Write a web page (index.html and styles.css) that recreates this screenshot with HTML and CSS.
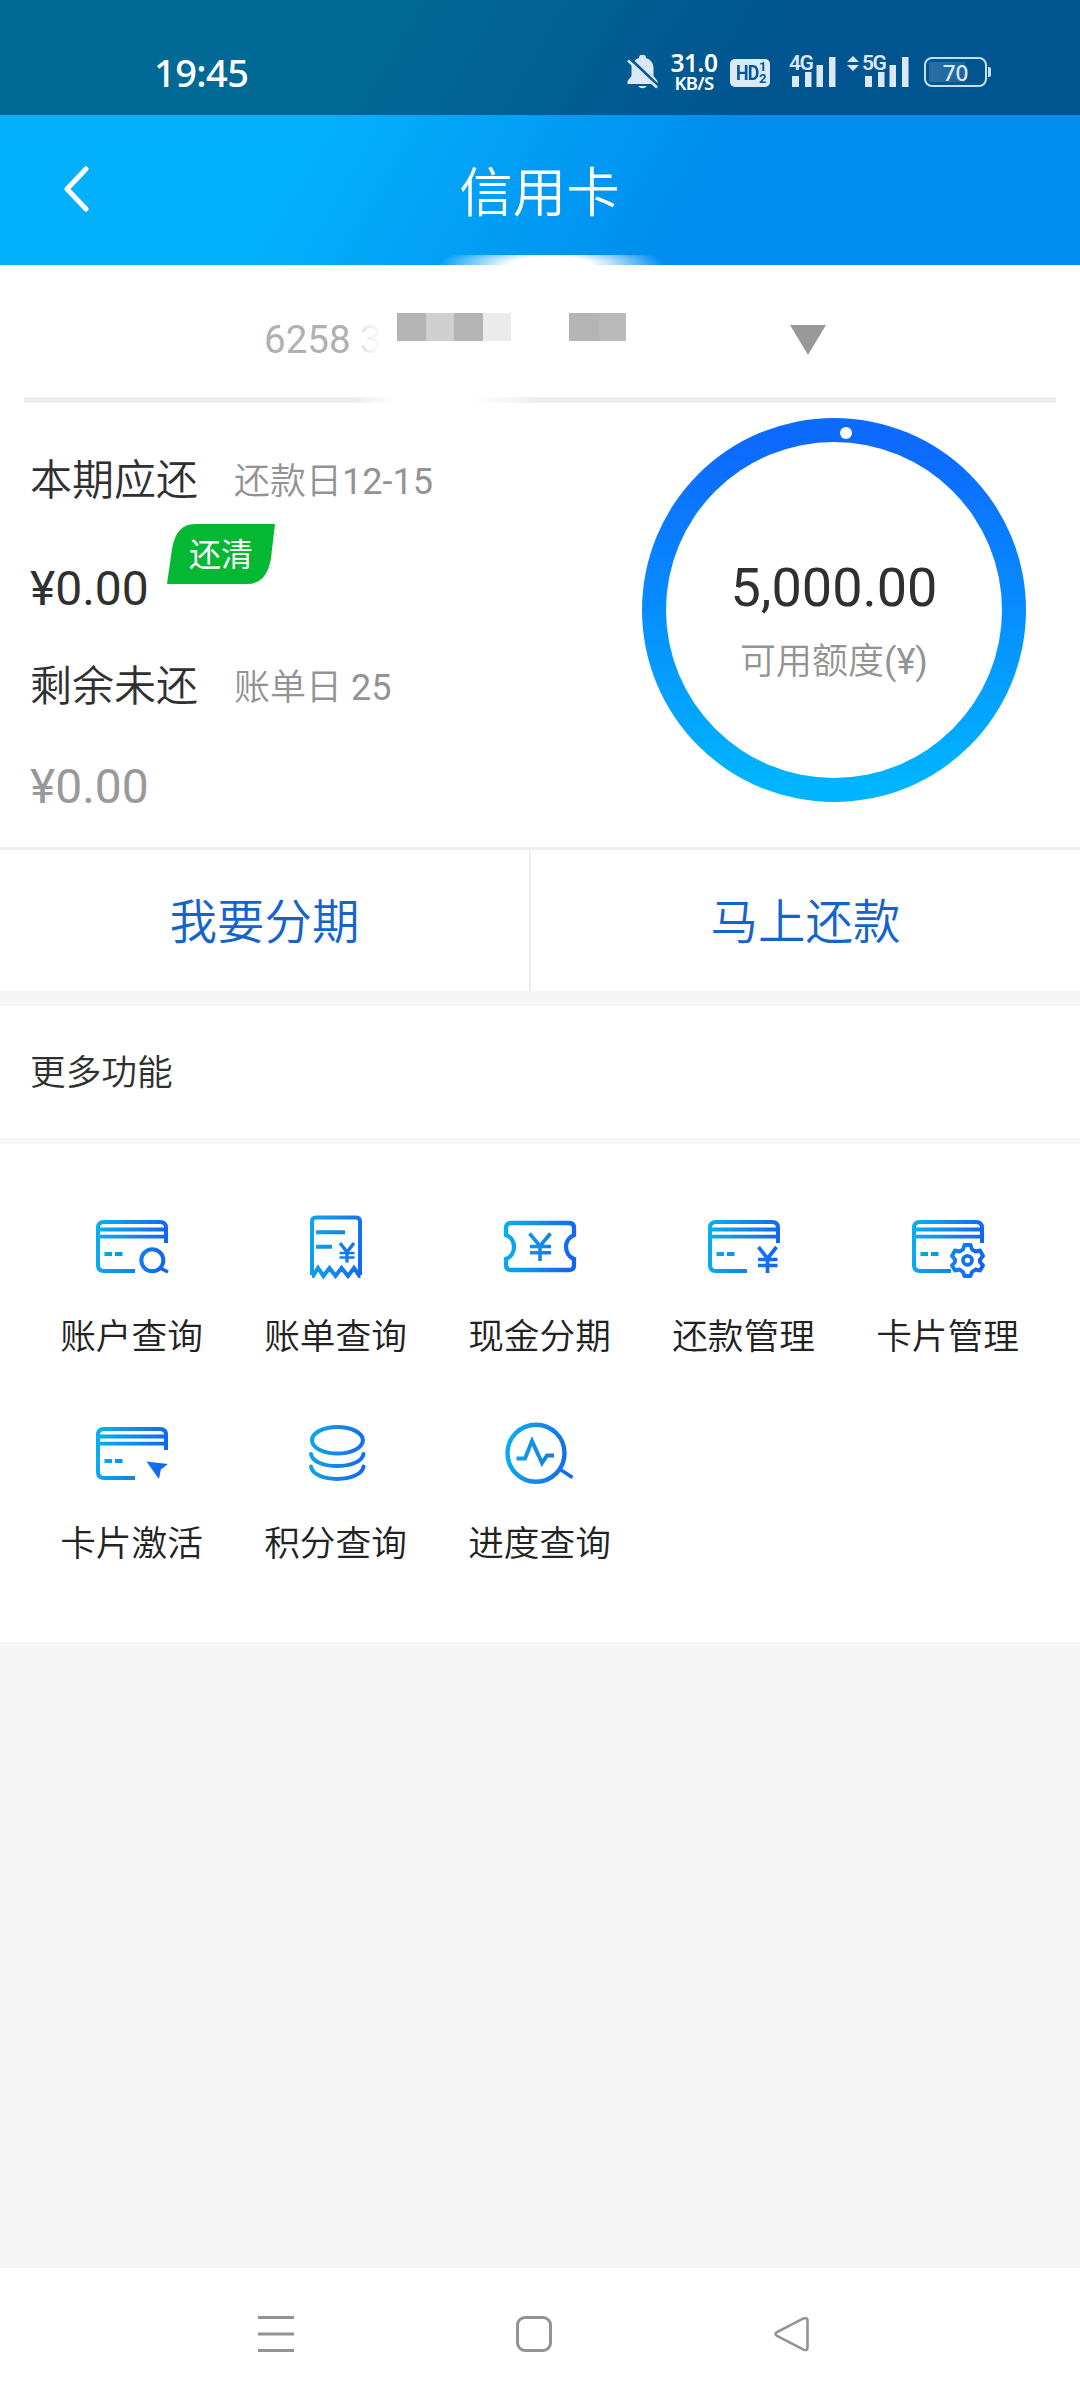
FILE: index.html
```html
<!DOCTYPE html>
<html lang="zh-CN">
<head>
<meta charset="utf-8">
<title>信用卡</title>
<link rel="stylesheet" href="styles.css">
</head>
<body>
<svg class="defs" width="0" height="0" aria-hidden="true">
  <defs>
    <linearGradient id="blue" gradientUnits="userSpaceOnUse" x1="0" y1="30" x2="72" y2="42">
      <stop offset="0" stop-color="#06b0ee"/><stop offset=".5" stop-color="#1489e6"/><stop offset="1" stop-color="#1262f2"/>
    </linearGradient>
    <g id="card">
      <path d="M70 32V17q0-6-6-6H8q-6 0-6 6v37q0 6 6 6h31"/>
      <path d="M3 18.500h66M3 25.700h66" stroke-width="3.800"/>
      <path d="M8.500 43H16M19 43h7.500"/>
    </g>
  </defs>
</svg>
<header class="top">
  <div class="status">
    <span class="time">19:45</span>
    <div class="indicators">
      <svg class="bell" width="31" height="34" viewBox="0 0 31 34">
        <path d="M12 3a3.500 3.500 0 0 1 7 0c5 1.500 7.500 5.500 7.500 10v8l4 5v3H.500v-3l4-5v-8C4.500 8.500 7 4.500 12 3zM11.500 31h8c-1 3-7 3-8 0z" fill="#dbe8f8"/>
        <path d="M3 3.500l29 28" stroke="#015897" stroke-width="3"/>
        <path d="M1 5.500l29 27" stroke="#dbe8f8" stroke-width="2.600"/>
      </svg>
      <div class="speed"><span class="rate">31.0</span><span class="unit">KB/S</span></div>
      <div class="hd"><b>HD</b><span class="sims"><i>1</i><i>2</i></span></div>
      <div class="signal sim1"><span class="net">4G</span>
        <svg width="44" height="31" viewBox="0 0 44 31"><path d="M0 20h7v11H0zM13 16h6.500v15H13zM24.500 9h6.500v22h-6.500zM37 1h6.500v30H37z" fill="#dbe8f8"/></svg>
      </div>
      <div class="signal sim2">
        <svg class="updown" width="12" height="16" viewBox="0 0 12 16"><path d="M0 6l6-6 6 6zM0 9h12l-6 6z" fill="#dbe8f8"/></svg>
        <span class="net">5G</span>
        <svg width="44" height="31" viewBox="0 0 44 31"><path d="M0 20h7v11H0zM13 16h6.500v15H13zM24.500 9h6.500v22h-6.500zM37 1h6.500v30H37z" fill="#dbe8f8"/></svg>
      </div>
      <div class="battery"><span>70</span></div>
    </div>
  </div>
  <nav class="titlebar">
    <svg class="back" width="28" height="46" viewBox="0 0 28 46"><path d="M24 3L5 23l19 20" fill="none" stroke="#fff" stroke-width="5" stroke-linecap="round" stroke-linejoin="round"/></svg>
    <h1>信用卡</h1>
    <span class="glow"></span>
  </nav>
</header>

<main>
  <section class="picker">
    <span class="number">6258 <em>3</em></span>
    <span class="mask m1"></span>
    <span class="mask m2"></span>
    <span class="arrow"></span>
  </section>

  <section class="summary">
    <div class="bills">
      <p class="bill"><strong>本期应还</strong><span>还款日<i>12-15</i></span></p>
      <p class="amount due">¥0.00
        <span class="badge"><svg width="108" height="60" viewBox="0 0 108 60"><path d="M0 60L5 25Q9 0 28 0H108L104 34Q100 60 80 60Z" fill="#04b834"/></svg><span>还清</span></span>
      </p>
      <p class="bill"><strong>剩余未还</strong><span>账单日<i> 25</i></span></p>
      <p class="amount rest">¥0.00</p>
    </div>
    <div class="ring">
      <div class="inner"><b>5,000.00</b><span>可用额度<i>(¥)</i></span></div>
      <i class="dot"></i>
    </div>
  </section>

  <section class="actions"><a>我要分期</a><a>马上还款</a></section>
  <h2 class="more">更多功能</h2>

  <section class="grid">
    <div class="item">
      <svg class="icon" viewBox="0 0 72 72"><use href="#card"/><circle cx="56.300" cy="49.300" r="11"/><path d="M64 57l8 4" stroke-width="3.400"/></svg>
      <span>账户查询</span></div>
    <div class="item">
      <svg class="icon" viewBox="0 0 72 72"><path d="M12 64V10.500q0-4 4-4h40q4 0 4 4V64"/><path d="M12 65h1l5-8 5.500 8 6-8 6 8 6-8 6.500 8 6-8 5.500 8h1"/><path d="M16 21.200h29M16 35.700h16"/><path d="M39.500 42h15M39.500 46.500h15" stroke-width="2.600"/><path d="M40 32l7 9 7-9M47 41v10.500" stroke-width="3.400"/></svg>
      <span>账单查询</span></div>
    <div class="item">
      <svg class="icon" viewBox="0 0 72 72"><path d="M2 17q0-5 5-5H65q5 0 5 5v7a13 13 0 0 0 0 24v6q0 5-5 5H7q-5 0-5-5v-6a13 13 0 0 0 0-24z" stroke-width="4.300"/><path d="M25.500 22.500L36 35l10.500-12.500M36 35v15M26 35.500h21M26 41.800h21" stroke-width="3.600"/></svg>
      <span>现金分期</span></div>
    <div class="item">
      <svg class="icon" viewBox="0 0 72 72"><use href="#card"/><path d="M50.500 36l9 11.500 9-11.500M59.500 47v15M50 48.500h19.500M50 54.500h19.500" stroke-width="3.700"/></svg>
      <span>还款管理</span></div>
    <div class="item">
      <svg class="icon" viewBox="0 0 72 72"><use href="#card"/><path d="M52.500 34h6l1.500 4.500 3.500 2 4.500-1 3 5.500-3 3.500v2.500l3 3.500-3 5-4.500-1-3.500 2.500-1.500 4h-6l-1.500-4-3.500-2.500-4.500 1-3-5 3-3.500v-2.500l-3-3.500 3-5.500 4.500 1 3.500-2z" stroke-width="3.900" stroke-linejoin="round"/><circle cx="55.500" cy="49.300" r="4.500" stroke-width="3.700"/></svg>
      <span>卡片管理</span></div>
    <div class="item">
      <svg class="icon" viewBox="0 0 72 72"><use href="#card"/><path d="M50.400 43.500l21.500 2.500-7 5.500-2 9.500z" fill="url(#blue)" stroke="none"/></svg>
      <span>卡片激活</span></div>
    <div class="item">
      <svg class="icon" viewBox="0 0 72 72"><g stroke-linecap="round"><ellipse cx="37.400" cy="22.300" rx="25.500" ry="13.300"/><path d="M11 36c2 16 50 16 52.500 0M11 48.500c2 16.500 50 16.500 52.500 0"/></g></svg>
      <span>积分查询</span></div>
    <div class="item">
      <svg class="icon" viewBox="0 0 72 72"><circle cx="32" cy="35.200" r="28.500" stroke-width="4.400"/><path d="M12.500 40.500H21l7-17.500 10 22 5-7.500h7"/><path d="M55.500 51l13 8.500" stroke-width="3.600"/></svg>
      <span>进度查询</span></div>
  </section>
</main>

<footer class="navbar">
  <svg width="36" height="36" viewBox="0 0 36 36"><path d="M0 1.500h36M0 18h36M0 34.500h36"/></svg>
  <svg width="36" height="36" viewBox="0 0 36 36"><rect x="1.500" y="1.500" width="33" height="33" rx="7.500"/></svg>
  <svg width="36" height="36" viewBox="0 0 36 36"><path d="M29.500 2.400L3 16q-3 2 0 4l26.500 13.600q4 1.500 4-2v-27q0-3.500-4-2.200z" stroke-width="2.600"/></svg>
</footer>
</body>
</html>
```
FILE: styles.css
```css
* { box-sizing: border-box; margin: 0; padding: 0; }
body {
  width: 1080px; height: 2400px; display: flex; flex-direction: column;
  background: #f5f5f5; color: #303030;
  font-family: Roboto, "Noto Sans CJK SC", sans-serif;
}
.defs { position: absolute; }
i, em { font-style: normal; }

.top { height: 265px; background: linear-gradient(120deg, #03b0fb 33%, #008def 66%); }
.status { height: 115px; background: rgba(0, 0, 0, .4); display: flex; justify-content: space-between; padding: 0 93px 0 154px; }
.time { font: 500 38px/60px "Noto Sans", sans-serif; color: #fff; padding-top: 42px; letter-spacing: -.6px; }
.indicators { display: flex; align-items: flex-start; padding-top: 55px; color: #dbe8f8; }
.speed { width: 50px; margin: -4px 0 0 11px; display: flex; flex-direction: column; align-items: center; color: #fff; font-family: "Noto Sans", sans-serif; font-weight: 600; }
.rate { font-size: 24.500px; line-height: 23px; letter-spacing: -.5px; }
.unit { font-size: 18.500px; line-height: 18px; letter-spacing: -.7px; }
.hd { width: 40px; height: 28px; margin: 4px 0 0 11px; border-radius: 5px; background: #dbe8f8; color: #015897; display: flex; justify-content: center; gap: 1px; }
.hd b { font-size: 21px; line-height: 29px; letter-spacing: -1px; transform: scaleX(.85); }
.hd .sims { display: flex; flex-direction: column; font: 700 13px/12px Roboto, sans-serif; padding-top: 2px; margin-left: -2px; }
.signal { display: flex; align-items: flex-start; height: 33px; }
.signal .net { width: 23px; margin-right: -20px; font: 600 21px/16px Roboto, sans-serif; letter-spacing: -1.5px; }
.signal > svg:last-child { margin-top: 1px; }
.sim1 { margin-left: 19px; }
.sim2 { margin-left: 11px; }
.updown { margin: 1px 3px 0 0; }
.battery { position: relative; width: 63px; height: 30px; margin: 2px 0 0 15px; border: 2px solid #c6dcef; border-radius: 8px; text-align: center; background: linear-gradient(90deg, #2a6fa7, #1c659f) 3px 3px / 36px 20px no-repeat; }
.battery span { font: 500 22.500px/27px "Noto Sans", sans-serif; }
.battery::after { content: ""; position: absolute; right: -6px; top: 8px; width: 3px; height: 10px; border-radius: 0 2px 2px 0; background: #c6dcef; }

.titlebar { position: relative; height: 150px; display: flex; align-items: center; justify-content: center; overflow: hidden; }
.back { position: absolute; left: 62px; top: 51px; }
h1 { font: 350 53.500px/80px "Noto Sans CJK SC", sans-serif; color: #fff; padding: 0 1px 2px 0; }
.glow { position: absolute; left: 435px; top: 140px; width: 232px; height: 10px; background: radial-gradient(ellipse 116px 24px at 50% 100%, #fff 35%, rgba(255, 255, 255, 0) 97%); }

main { background: #fff; }
.picker { position: relative; height: 138px; margin: 0 24px; display: flex; align-items: flex-start; padding: 48px 0 0 240px; }
.picker::after { content: ""; position: absolute; left: 0; right: 0; bottom: 0; height: 6px; background: linear-gradient(90deg, #eee 330px, #fff 372px, #fff 447px, #eee 515px); }
.number { width: 133px; white-space: nowrap; font-size: 38.500px; line-height: 54px; color: #b0b0b0; }
.number em { color: transparent; background: linear-gradient(90deg, #e0e0e0, #fff); background-clip: text; -webkit-background-clip: text; }
.mask { height: 28px; }
.m1 { width: 114px; background: linear-gradient(90deg, #b4b4b4 29px, #cfcfcf 29px 57px, #b4b4b4 57px 86px, #ebebeb 86px); }
.m2 { width: 57px; margin-left: 58px; background: linear-gradient(90deg, #b5b5b5 30px, #bababa 30px); }
.arrow { margin: 12px 0 0 164px; border: solid transparent; border-width: 30px 18px 0; border-top-color: #999; }

.summary { height: 444px; display: flex; justify-content: space-between; padding: 0 54px 0 30px; }
.bills { padding-top: 48px; }
.bill { display: flex; align-items: center; height: 60px; }
.bill strong { font-weight: 350; font-size: 42px; line-height: 60px; width: 204px; }
.bill span { font-size: 36px; line-height: 60px; font-weight: 350; color: #939393; padding-top: 1px; white-space: pre; }
.bill i, .inner i { font-weight: 400; }
.amount { position: relative; font-size: 48px; line-height: 60px; }
.due { margin: 48px 0 38px; }
.rest { margin-top: 40px; color: #999; }
.badge { position: absolute; left: 137px; top: -35px; width: 108px; height: 60px; color: #fff; }
.badge svg { display: block; }
.badge span { position: absolute; left: 22px; top: 1px; font-size: 32px; line-height: 60px; }
.ring { position: relative; width: 384px; height: 384px; margin-top: 15px; padding: 24px; border-radius: 50%; background: linear-gradient(#0d6aff 8%, #00b4ff 95%); }
.inner { height: 336px; border-radius: 50%; background: #fff; display: flex; flex-direction: column; align-items: center; padding-top: 114px; }
.inner b { font-weight: 400; font-size: 54px; line-height: 64px; }
.inner span { font-size: 36px; line-height: 60px; font-weight: 350; color: #939393; margin-top: 12px; }
.dot { position: absolute; left: 198px; top: 9px; width: 12px; height: 12px; border-radius: 50%; background: #fff; }

.actions { display: flex; height: 144px; border-top: 3px solid #eee; }
.actions a { flex: 1; padding-top: 3px; font-size: 47.500px; font-weight: 350; line-height: 141px; text-align: center; color: #1464cb; }
.actions a:first-child { flex: 0 0 531px; border-right: 2px solid #eee; }
.more { height: 153px; border: solid #f5f5f5; border-width: 15px 0 6px; padding-left: 30px; font-size: 35.700px; font-weight: 350; line-height: 134px; }

.grid { display: grid; grid-template-columns: repeat(5, 204px); grid-auto-rows: 207px; height: 498px; padding: 67px 30px 0; }
.item { display: flex; flex-direction: column; align-items: center; color: #222; font-size: 35.700px; font-weight: 350; line-height: 50px; }
.item span { margin: 29px 1px 0 0; }
.icon { width: 72px; height: 72px; fill: none; stroke: url(#blue); stroke-width: 4; overflow: visible; }

.navbar { margin-top: auto; height: 132px; background: #fff; display: flex; gap: 222px; padding: 48px 0 0 258px; }
.navbar svg { fill: none; stroke: #939393; stroke-width: 3; }
```
